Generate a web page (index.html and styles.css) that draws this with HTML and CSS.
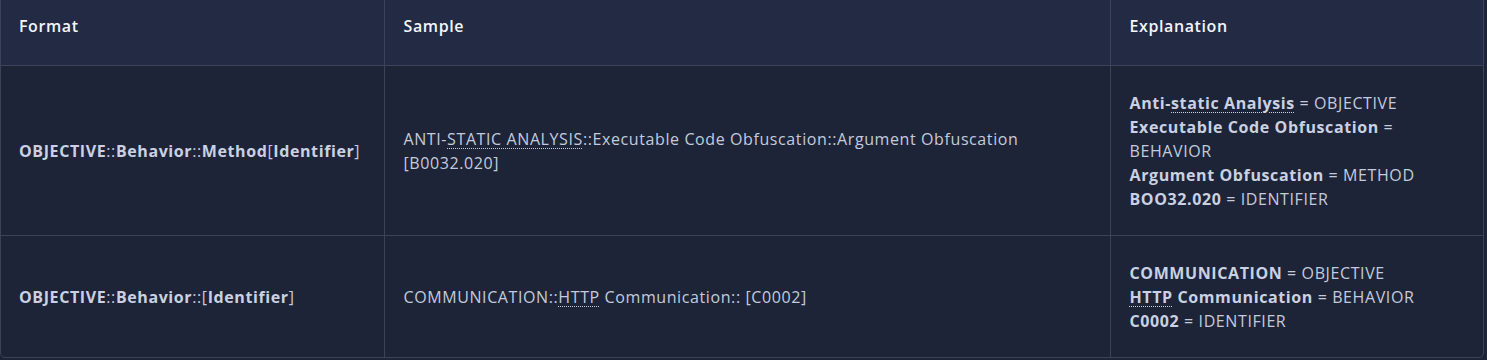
FILE: index.html
```html
<!DOCTYPE html>
<html lang="en">
<head>
<meta charset="utf-8">
<title>ID formats</title>
<link rel="stylesheet" href="styles.css">
</head>
<body>
<div class="table-wrap">
  <table class="formats">
    <colgroup>
      <col class="col-format">
      <col class="col-sample">
      <col class="col-expl">
    </colgroup>
    <thead>
      <tr>
        <th>Format</th>
        <th>Sample</th>
        <th>Explanation</th>
      </tr>
    </thead>
    <tbody>
      <tr>
        <td><strong>OBJECTIVE</strong>::<strong>Behavior</strong>::<strong>Method</strong>[<strong>Identifier</strong>]</td>
        <td>ANTI-<abbr title="Static Analysis">STATIC ANALYSIS</abbr>::Executable Code Obfuscation::Argument Obfuscation [B0032.020]</td>
        <td>
          <strong>Anti-<abbr title="Static Analysis">static Analysis</abbr></strong> = OBJECTIVE<br>
          <strong>Executable Code Obfuscation</strong> = BEHAVIOR<br>
          <strong>Argument Obfuscation</strong> = METHOD<br>
          <strong>BOO32.020</strong> = IDENTIFIER
        </td>
      </tr>
      <tr>
        <td><strong>OBJECTIVE</strong>::<strong>Behavior</strong>::[<strong>Identifier</strong>]</td>
        <td>COMMUNICATION::<abbr title="Hypertext Transfer Protocol">HTTP</abbr> Communication:: [C0002]</td>
        <td>
          <strong>COMMUNICATION</strong> = OBJECTIVE<br>
          <strong><abbr title="Hypertext Transfer Protocol">HTTP</abbr> Communication</strong> = BEHAVIOR<br>
          <strong>C0002</strong> = IDENTIFIER
        </td>
      </tr>
    </tbody>
  </table>
</div>
</body>
</html>
```
FILE: styles.css
```css
html, body {
  margin: 0;
  padding: 0;
  background: #1e2438;
}

body {
  font-family: "Open Sans", "Noto Sans", "Liberation Sans", sans-serif;
  font-size: 16px;
  line-height: 24px;
  letter-spacing: 0.6px;
  color: #c3cbdc;
}

.table-wrap {
  width: 1482px;
  margin-top: -12px;
  border: 1px solid #3b4358;
  border-radius: 5px;
  overflow: hidden;
  background: #1e2438;
}

.formats {
  width: 100%;
  border-collapse: collapse;
  table-layout: fixed;
}

.col-format { width: 383px; }
.col-sample { width: 726px; }

.formats th,
.formats td {
  text-align: left;
  vertical-align: middle;
  padding: 24.5px 18px 24.5px 19px;
  border-left: 1px solid #3b4358;
  border-top: 1px solid #3b4358;
}

.formats th:first-child,
.formats td:first-child {
  border-left: none;
  padding-left: 18px;
}

.formats thead th {
  border-top: none;
  background: #222a44;
  color: #f2f5fb;
  font-weight: 600;
  padding-top: 25px;
  padding-bottom: 27px;
}

.formats strong {
  font-weight: 700;
  color: #c9d1e2;
}

.formats abbr {
  text-decoration: underline dotted;
  text-decoration-thickness: 1px;
  text-underline-offset: 3px;
}
```
